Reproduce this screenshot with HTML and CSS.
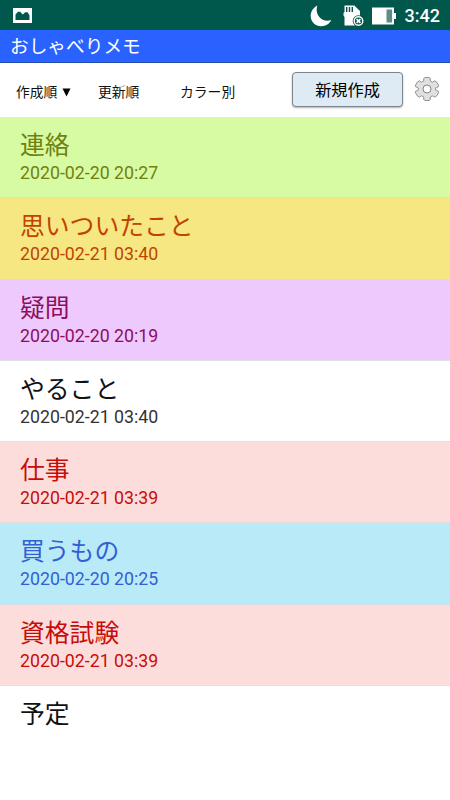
FILE: index.html
```
<!DOCTYPE html>
<html lang="ja">
<head>
    <meta charset="UTF-8">
    <title>おしゃべりメモ</title>
    <link rel="stylesheet" href="styles.css">
</head>
<body>
    <div class="statusbar">
        <svg class="icon-picture" width="19" height="15" viewBox="0 0 19 15">
            <path fill="#fff" fill-rule="evenodd" d="M0 0h19v15H0zM2.5 12h14V7.2L14.5 4.3h-2.3L9.7 6.5 7.2 3.8H5L2.5 6.5z"/>
        </svg>
        <div class="status-right">
            <svg class="icon-moon" width="22" height="22" viewBox="0 0 22 22">
                <path fill="#fff" d="M7.3.6C2.7 3.1.5 7.2.7 11.5 1 17.3 5.7 21.4 11.3 21.3c4.6-.1 8.2-2.3 9.9-6.2-3.3 1.3-7.3 1-10.3-1.5C7.3 10.6 5.7 6 7.3.6z"/>
            </svg>
            <svg class="icon-sd" width="21" height="22" viewBox="0 0 21 22">
                <path fill="#fff" d="M1.5.5h9.8L17 6v14.5H1.5V12L.5 10.5V8l1-1z"/>
                <path stroke="#00574b" stroke-width="1.4" d="M3.7 2v5M6.5 2v5M9.3 2v5"/>
                <circle cx="15.5" cy="16" r="5.8" fill="#00574b"/>
                <circle cx="15.5" cy="16" r="4.3" fill="none" stroke="#fff" stroke-width="1.4"/>
                <path stroke="#fff" stroke-width="1.7" d="M13.6 14.1l3.8 3.8M17.4 14.1l-3.8 3.8"/>
            </svg>
            <svg class="icon-battery" width="24" height="18" viewBox="0 0 24 18">
                <path fill="#fff" d="M0 .5h22V6h2v6h-2v5.5H0z"/>
                <path fill="#5a8f85" d="M14.5 2.5h5.5v13h-5.5z"/>
            </svg>
            <span class="clock">3:42</span>
        </div>
    </div>

    <div class="header">おしゃべりメモ</div>

    <div class="toolbar">
        <span class="sort sort-created">作成順<svg class="arrow" width="9" height="9" viewBox="0 0 9 9"><path d="M.5.5h8l-4 8z"/></svg></span>
        <span class="sort sort-updated">更新順</span>
        <span class="sort sort-color">カラー別</span>
        <button class="new-button">新規作成</button>
        <svg class="icon-gear" width="26" height="26" viewBox="-13 -13 26 26">
            <path fill="#e0e0e0" stroke="#888" stroke-width=".9" stroke-linejoin="round" d="M-2-11.5H2L3.3-10.5V-8L5.4-6.8 7.6-8.1 9.3-7.3 11.6-3.8 11.3-2.2 8.5-.8V.8L11.3 2.2 11.6 3.8 9.3 7.3 7.6 8.1 5.4 6.8 3.3 8V10.5L2 11.5H-2L-3.3 10.5V8L-5.4 6.8-7.6 8.1-9.3 7.3-11.6 3.8-11.3 2.2-8.5.8V-.8L-11.3-2.2-11.6-3.8-9.3-7.3-7.6-8.1-5.4-6.8-3.3-8V-10.5z"/>
            <circle r="4" fill="#fff" stroke="#777" stroke-width=".9"/>
        </svg>
    </div>

    <div class="memo-list">
        <div class="memo green">
            <div class="title">連絡</div>
            <div class="date">2020-02-20 20:27</div>
        </div>
        <div class="memo yellow">
            <div class="title">思いついたこと</div>
            <div class="date">2020-02-21 03:40</div>
        </div>
        <div class="memo purple">
            <div class="title">疑問</div>
            <div class="date">2020-02-20 20:19</div>
        </div>
        <div class="memo white">
            <div class="title">やること</div>
            <div class="date">2020-02-21 03:40</div>
        </div>
        <div class="memo red">
            <div class="title">仕事</div>
            <div class="date">2020-02-21 03:39</div>
        </div>
        <div class="memo blue">
            <div class="title">買うもの</div>
            <div class="date">2020-02-20 20:25</div>
        </div>
        <div class="memo red">
            <div class="title">資格試験</div>
            <div class="date">2020-02-21 03:39</div>
        </div>
        <div class="memo white last">
            <div class="title">予定</div>
        </div>
    </div>
</body>
</html>
```
FILE: styles.css
```
* {
    box-sizing: border-box;
}

body {
    margin: 0;
    height: 800px;
    overflow: hidden;
    background-color: white;
    font-family: Roboto, "Noto Sans CJK JP", sans-serif;
}

svg {
    display: block;
    flex: none;
}

.statusbar {
    display: flex;
    align-items: center;
    justify-content: space-between;
    height: 30px;
    padding: 1px 10px 0 13px;
    background-color: #00574b;
}

.status-right {
    display: flex;
    align-items: center;
}

.icon-sd {
    margin-left: 11px;
}

.icon-battery {
    margin-left: 8px;
}

.clock {
    margin-left: 9px;
    color: white;
    font-size: 18px;
    font-weight: 500;
    line-height: 28px;
    padding-top: 1px;
}

.header {
    height: 33px;
    padding: 1px 0 0 10px;
    background-color: #2962ff;
    border-bottom: 1px solid #244fae;
    color: white;
    font-size: 18.7px;
    line-height: 33px;
}

.toolbar {
    display: flex;
    align-items: center;
    height: 54px;
    padding: 0 10px 2px 16px;
}

.sort {
    display: flex;
    align-items: center;
    font-size: 13.8px;
    line-height: 20px;
    padding-top: 5px;
    color: #111;
}

.arrow {
    margin: 2px 0 0 5px;
}

.sort-created {
    width: 82px;
}

.sort-updated {
    width: 82px;
}

.new-button {
    width: 111px;
    height: 35px;
    margin-left: auto;
    padding: 0;
    border: 1px solid #7c858b;
    border-radius: 4px;
    background-color: #deebf5;
    box-shadow: 0 1px 2px rgba(0, 0, 0, 0.3);
    color: black;
    font-family: inherit;
    font-size: 16.2px;
}

.icon-gear {
    margin-left: 11px;
}

.memo {
    height: 81.3px;
    padding: 11px 20px 0;
    border-bottom: 1px solid #e3dfdc;
}

.last {
    border-bottom: none;
}

.title {
    font-size: 24.8px;
    line-height: 36px;
}

.date {
    font-size: 17.75px;
    line-height: 19px;
}

.green {
    background-color: #d7fba2;
    border-bottom-color: #dde5b8;
    color: #728010;
}

.yellow {
    background-color: #f7e783;
    border-bottom-color: #e9dbb0;
    color: #bf4400;
}

.purple {
    background-color: #edc9fd;
    color: #8e0d5c;
}

.white {
    background-color: white;
    color: #111;
}

.white .date {
    color: #333;
}

.red {
    background-color: #fcdddc;
    color: #c70d08;
}

.blue {
    background-color: #b8eaf8;
    border-bottom-color: #d5dde6;
    color: #345fd3;
}
```
